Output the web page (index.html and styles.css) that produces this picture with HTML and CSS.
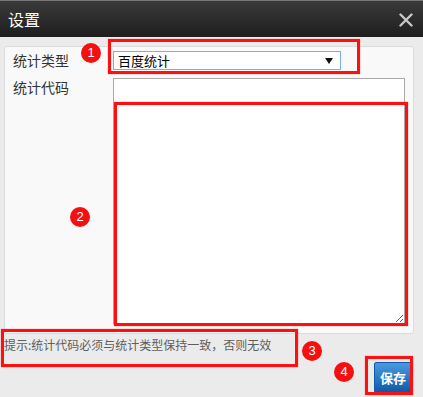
FILE: index.html
```html
<!DOCTYPE html>
<html lang="zh-CN">
<head>
  <meta charset="UTF-8">
  <title>设置</title>
  <link rel="stylesheet" href="styles.css">
</head>
<body>

  <div class="dialog">
    <div class="titlebar">
      <span class="title">设置</span>
      <span class="close">
        <svg width="14" height="14" viewBox="0 0 14 14">
          <path d="M1.5 1.5 L12.5 12.5 M12.5 1.5 L1.5 12.5" stroke="#c8c8c8" stroke-width="2.4" stroke-linecap="round"/>
        </svg>
      </span>
    </div>

    <div class="content">
      <div class="panel">
        <label class="label">统计类型</label>
        <div class="select">
          <span>百度统计</span>
          <svg width="8" height="6" viewBox="0 0 8 6"><path d="M0 0 H8 L4 6 Z" fill="#111"/></svg>
        </div>
        <label class="label">统计代码</label>
        <textarea class="code"></textarea>
      </div>

      <p class="hint">提示:统计代码必须与统计类型保持一致，否则无效</p>

      <div class="footer">
        <button class="save">保存</button>
      </div>
    </div>

    <!-- annotations -->
    <div class="mark box1"></div>
    <div class="mark box2"></div>
    <div class="mark box3"></div>
    <div class="mark box4"></div>
    <span class="badge b1">1</span>
    <span class="badge b2">2</span>
    <span class="badge b3">3</span>
    <span class="badge b4">4</span>
  </div>

</body>
</html>
```

FILE: styles.css
```css
body {
  margin: 0;
  font-family: "Noto Sans CJK SC", "Liberation Sans", sans-serif;
  background-color: #ebebeb;
}

.dialog {
  position: relative;
  width: 423px;
  height: 397px;
  background-color: #ebebeb;
  overflow: hidden;
}

.titlebar {
  height: 36px;
  border-top: 1px solid #777;
  background: linear-gradient(#3a3a3a, #1e1e1e);
  display: flex;
  align-items: center;
  justify-content: space-between;
  padding: 0 10px 0 8px;
}

.title {
  color: #fff;
  font-size: 16px;
  line-height: 20px;
}

.close {
  display: flex;
  margin-top: 2px;
}

.content {
  padding: 9px 9px 0 4px;
}

.panel {
  box-sizing: border-box;
  height: 288px;
  border: 1px solid #dcdcdc;
  border-radius: 3px;
  background-color: #f9f9f9;
  display: grid;
  grid-template-columns: 108px 292px;
  grid-template-rows: 19px 246px;
  row-gap: 8px;
  padding-top: 4px;
}

.label {
  padding-left: 8px;
  font-size: 14px;
  line-height: 18px;
  color: #333;
}

.select {
  box-sizing: border-box;
  width: 228px;
  height: 19px;
  border: 1px solid #7eaee0;
  background-color: #fff;
  display: flex;
  align-items: center;
  justify-content: space-between;
  padding: 0 7px 0 4px;
  font-size: 13px;
  color: #000;
}

.code {
  box-sizing: border-box;
  width: 292px;
  height: 246px;
  margin: 0;
  border: 1px solid #a9a9a9;
  background-color: #fff;
}

.hint {
  margin: 2px 0 0 0;
  font-size: 12px;
  line-height: 18px;
  color: #5e5e5e;
}

.footer {
  display: flex;
  justify-content: flex-end;
  margin-top: 8px;
  padding-right: 2px;
}

.save {
  width: 38px;
  height: 31px;
  padding: 0;
  border: 1px solid #0b5ba8;
  border-radius: 2px;
  background: linear-gradient(#4b9ae0, #0b5ba8);
  color: #fff;
  font-family: "Noto Sans CJK SC", sans-serif;
  font-size: 13px;
  font-weight: bold;
}

.mark {
  position: absolute;
  box-sizing: border-box;
  border: 3px solid #ff1010;
  box-shadow: 0 0 1px #ff6060;
}

.box1 { left: 108px; top: 39px; width: 252px; height: 35px; }
.box2 { left: 114px; top: 102px; width: 294px; height: 224px; }
.box3 { left: 1px; top: 329px; width: 297px; height: 38px; }
.box4 { left: 365px; top: 356px; width: 48px; height: 39px; }

.badge {
  position: absolute;
  width: 20px;
  height: 20px;
  border-radius: 50%;
  background-color: #f41010;
  color: #fff;
  font-family: "Liberation Sans", Arial, sans-serif;
  font-size: 13px;
  line-height: 20px;
  text-align: center;
}

.b1 { left: 81px; top: 43px; }
.b2 { left: 70px; top: 207px; }
.b3 { left: 302px; top: 341px; }
.b4 { left: 334px; top: 362px; }
```
